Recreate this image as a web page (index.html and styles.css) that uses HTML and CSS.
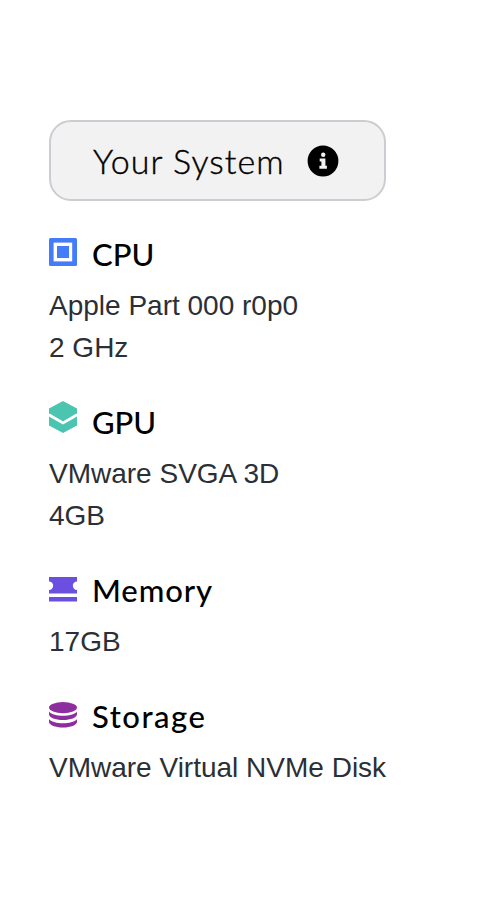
FILE: index.html
```
<!DOCTYPE html>
<html lang="en">
<head>
    <meta charset="UTF-8">
    <meta name="viewport" content="width=device-width, initial-scale=1.0">
    <title>Your System</title>
    <link rel="stylesheet" href="styles.css">
</head>
<body>
    <main class="system">
        <div class="system-header">
            <h1>Your System</h1>
            <svg class="info-icon" viewBox="0 0 32 32">
                <circle cx="16" cy="16" r="15.4" fill="#000"/>
                <circle cx="16.2" cy="9.800" r="2.2" fill="#f2f2f2"/>
                <path d="M12.7 13.500h5.700v7.300h1.500v3h-7.500v-3h2v-4.300h-1.700z" fill="#f2f2f2"/>
            </svg>
        </div>

        <section class="spec">
            <div class="spec-title">
                <svg class="icon" viewBox="0 0 28 28">
                    <rect width="28" height="28" rx="1.5" fill="#437bfb"/>
                    <rect x="4.6" y="4.6" width="18.6" height="18.8" fill="#fff"/>
                    <rect x="8" y="8" width="12" height="12" fill="#437bfb"/>
                </svg>
                <h2>CPU</h2>
            </div>
            <p>Apple Part 000 r0p0</p>
            <p>2 GHz</p>
        </section>

        <section class="spec">
            <div class="spec-title">
                <svg class="icon icon-gpu" viewBox="0 0 28 32">
                    <path d="M14 0l14 7.5v5.7L14 21.7 0 13.2V7.5z" fill="#4bc5af"/>
                    <path d="M0 15.4l14 8.1 14-8.1v9L14 32 0 24.4z" fill="#4bc5af"/>
                    <path d="M0 13.5l14 8.2 14-8.2" fill="none" stroke="#fff" stroke-width="2.4"/>
                </svg>
                <h2>GPU</h2>
            </div>
            <p>VMware SVGA 3D</p>
            <p>4GB</p>
        </section>

        <section class="spec">
            <div class="spec-title">
                <svg class="icon icon-memory" viewBox="0 0 28 25">
                    <path d="M0 0h28v4.5a4.2 4.2 0 0 0 0 8.4V16.5H0v-3.6a4.2 4.2 0 0 0 0-8.4z" fill="#6b4fe0"/>
                    <rect y="20" width="28" height="4.5" fill="#6b4fe0"/>
                </svg>
                <h2 class="memory">Memory</h2>
            </div>
            <p>17GB</p>
        </section>

        <section class="spec">
            <div class="spec-title">
                <svg class="icon icon-storage" viewBox="0 0 28 26">
                    <ellipse cx="14" cy="5.6" rx="14" ry="5.6" fill="#8e2da0"/>
                    <path d="M0 9.7c2.8 2.8 8 4 14 4s11.2-1.2 14-4v2.5c0 3.4-6.3 5.8-14 5.8S0 15.600 0 12.2z" fill="#8e2da0"/>
                    <path d="M0 17.3c2.8 2.8 8 4 14 4s11.2-1.2 14-4v2.5c0 3.4-6.3 5.8-14 5.8S0 23.2 0 19.8z" fill="#8e2da0"/>
                </svg>
                <h2 class="storage">Storage</h2>
            </div>
            <p>VMware Virtual NVMe Disk</p>
        </section>
    </main>
</body>
</html>
```
FILE: styles.css
```
* {
    margin: 0;
    padding: 0;
    box-sizing: border-box;
}

body {
    background-color: #fff;
    color: #2b2f36;
    font-family: "Liberation Sans", Arial, sans-serif;
    font-size: 28px;
    line-height: 42px;
}

.system {
    padding: 120px 0 0 49px;
}

.system-header {
    display: flex;
    align-items: center;
    width: 337px;
    height: 81px;
    margin-bottom: 33px;
    padding-left: 42px;
    background-color: #f2f2f2;
    border: 2px solid #cbcdd2;
    border-radius: 22px;
}

h1, h2 {
    font-family: Lato, sans-serif;
    color: #000;
    white-space: nowrap;
}

h1 {
    width: 191px;
    font-size: 34px;
    font-weight: 300;
    letter-spacing: 1.05px;
    -webkit-text-stroke: 0.4px #000;
}

.info-icon {
    width: 32px;
    height: 32px;
    margin-left: 23px;
}

.spec {
    margin-bottom: 33px;
}

.spec-title {
    display: flex;
    align-items: center;
    gap: 15px;
    height: 42px;
    margin-bottom: 9px;
}

.icon {
    width: 28px;
    height: 28px;
    margin-bottom: 6px;
}

.icon-gpu {
    height: 32px;
    margin-bottom: 12px;
}

.icon-memory {
    height: 25px;
    margin-bottom: 4px;
}

.icon-storage {
    height: 26px;
    margin-bottom: 4px;
}

h2 {
    padding-bottom: 2px;
    font-size: 31px;
    font-weight: 500;
}

.memory {
    letter-spacing: 0.9px;
}

.storage {
    letter-spacing: 1.5px;
}
```
